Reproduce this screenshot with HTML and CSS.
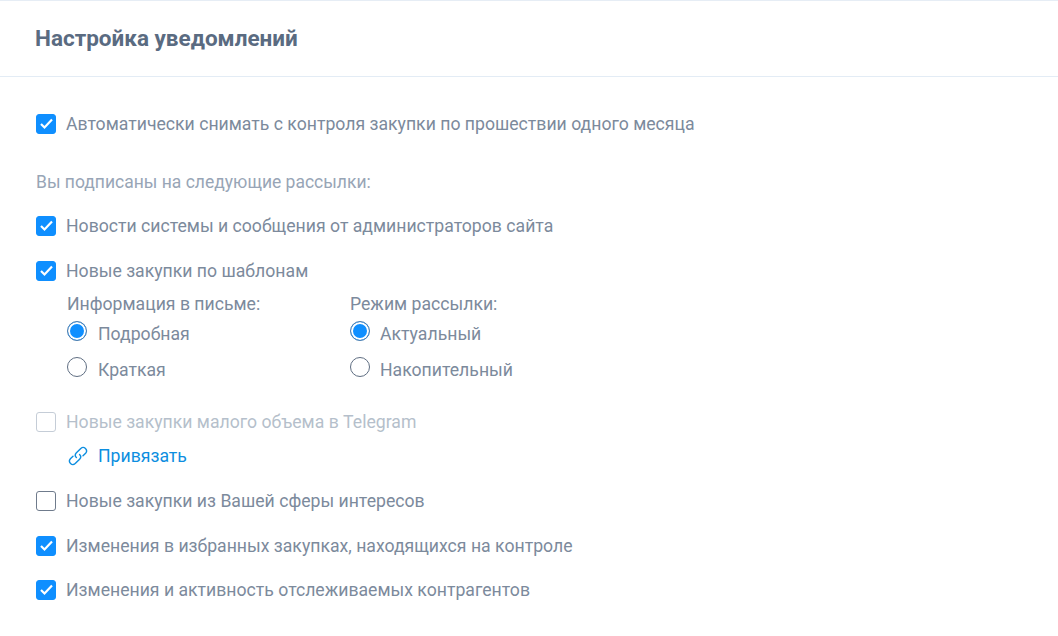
FILE: index.html
```html
<!DOCTYPE html>
<html lang="ru">
<head>
<meta charset="utf-8">
<title>Настройка уведомлений</title>
<link rel="stylesheet" href="styles.css">
</head>
<body>
<section class="card">
  <header class="card-head"><h2>Настройка уведомлений</h2></header>
  <div class="card-body">
    <label class="check first"><span class="box on"><svg viewBox="0 0 20 20"><path d="M5 10l3.5 3.5L16 5.6"/></svg></span>Автоматически снимать с контроля закупки по прошествии одного месяца</label>
    <p class="sub">Вы подписаны на следующие рассылки:</p>
    <label class="check news"><span class="box on"><svg viewBox="0 0 20 20"><path d="M5 10l3.5 3.5L16 5.6"/></svg></span>Новости системы и сообщения от администраторов сайта</label>
    <label class="check tpl"><span class="box on"><svg viewBox="0 0 20 20"><path d="M5 10l3.5 3.5L16 5.6"/></svg></span>Новые закупки по шаблонам</label>
    <div class="options">
      <div class="opt-col">
        <div class="opt-title">Информация в письме:</div>
        <label class="radio"><span class="dot on"></span>Подробная</label>
        <label class="radio"><span class="dot"></span>Краткая</label>
      </div>
      <div class="opt-col">
        <div class="opt-title">Режим рассылки:</div>
        <label class="radio"><span class="dot on"></span>Актуальный</label>
        <label class="radio"><span class="dot"></span>Накопительный</label>
      </div>
    </div>
    <label class="check disabled"><span class="box"></span>Новые закупки малого объема в Telegram</label>
    <a class="bind" href="#"><svg viewBox="0 0 20 20"><path d="M8.4 11.6a3.4 3.4 0 0 1 0-4.8l4.4-4.4a3.4 3.4 0 0 1 4.8 4.8l-2.6 2.6"/><path d="M11.6 8.4a3.4 3.4 0 0 1 0 4.8l-4.4 4.4a3.4 3.4 0 0 1-4.8-4.8l2.6-2.6"/></svg>Привязать</a>
    <label class="check interest"><span class="box"></span>Новые закупки из Вашей сферы интересов</label>
    <label class="check changes"><span class="box on"><svg viewBox="0 0 20 20"><path d="M5 10l3.5 3.5L16 5.6"/></svg></span>Изменения в избранных закупках, находящихся на контроле</label>
    <label class="check changes2"><span class="box on"><svg viewBox="0 0 20 20"><path d="M5 10l3.5 3.5L16 5.6"/></svg></span>Изменения и активность отслеживаемых контрагентов</label>
  </div>
</section>
</body>
</html>
```
FILE: styles.css
```css
* { box-sizing: border-box; }
html, body { margin: 0; padding: 0; background: #fff; }
body { width: 1058px; height: 636px; overflow: hidden; font-family: Roboto, "Liberation Sans", sans-serif; font-size: 17.65px; line-height: 24px; color: #7c8a9c; }
.card { border-top: 1px solid #e6edf5; }
.card-head { height: 76px; border-bottom: 1px solid #e3ecf5; padding: 0 35px; display: flex; align-items: center; }
.card-head h2 { margin: -2px 0 0; font-size: 22.5px; font-weight: 700; color: #5a6b81; line-height: 24px; }
.card-body { padding: 35px 36px 0; display: flex; flex-direction: column; align-items: flex-start; }
.check { display: flex; align-items: center; height: 24px; }
.box { width: 20px; height: 20px; border-radius: 3px; border: 1px solid #6f7b8c; margin-right: 10px; flex: none; background: #fff; }
.box.on { background: #0f8fff; border-color: #0f8fff; }
.box svg { display: block; width: 20px; height: 20px; margin: -1px; fill: none; stroke: #fff; stroke-width: 2.2; }
.sub { margin: 34px 0 0; color: #98a5b6; font-size: 17.5px; }
.news { margin-top: 20px; }
.tpl { margin-top: 21px; }
.options { display: flex; margin: 9px 0 0 31px; }
.opt-col { width: 283px; }
.opt-title { height: 24px; }
.radio { display: flex; align-items: center; height: 24px; margin-bottom: 12px; }
.opt-col .radio:first-of-type { margin-top: 6px; }
.dot { width: 20px; height: 20px; border-radius: 50%; border: 1px solid #5f6e82; margin-right: 11px; margin-top: -6px; flex: none; background: #fff; }
.opt-col + .opt-col .dot { margin-right: 10px; }
.dot.on { border-color: #4f7fae; box-shadow: inset 0 0 0 2px #fff; background: #0f8fff; }
.disabled { color: #b5bfcb; margin-top: 16px; }
.disabled .box { border-color: #c5cdd7; }
.bind { display: flex; align-items: center; height: 24px; margin: 10px 0 0 32px; color: #0d8ee0; text-decoration: none; }
.bind svg { width: 20px; height: 20px; margin-right: 10px; fill: none; stroke: #0d8ee0; stroke-width: 1.4; stroke-linecap: round; stroke-linejoin: round; }
.interest { margin-top: 21px; }
.changes { margin-top: 21px; }
.changes2 { margin-top: 20px; }
```
